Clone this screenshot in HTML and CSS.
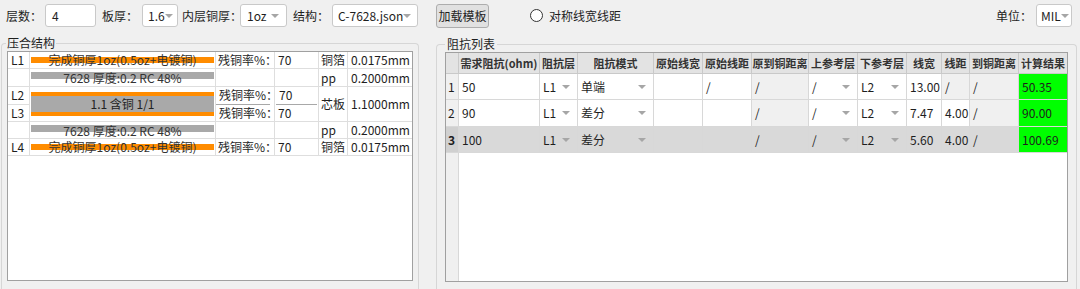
FILE: index.html
```html
<!DOCTYPE html>
<html lang="zh-CN">
    <head>
        <meta charset="UTF-8">
        <title>阻抗计算</title>
        <link rel="stylesheet" href="styles.css">
    </head>
    <body>

        <div class="toolbar">
            <span class="lbl lbl-layers">层数：</span>
            <div class="edit edit-layers">4</div>
            <span class="lbl lbl-thick">板厚：</span>
            <div class="combo combo-thick">1.6<span class="arrow"></span></div>
            <span class="lbl lbl-inner">内层铜厚：</span>
            <div class="combo combo-inner">1oz<span class="arrow"></span></div>
            <span class="lbl lbl-struct">结构：</span>
            <div class="combo combo-struct">C-7628.json<span class="arrow"></span></div>
            <button class="btn-load">加载模板</button>
            <span class="radio"></span>
            <span class="lbl">对称线宽线距</span>
            <span class="lbl lbl-unit">单位：</span>
            <div class="combo combo-unit">MIL<span class="arrow"></span></div>
        </div>

        <div class="panels">
            <fieldset class="group group-stack">
                <legend>压合结构</legend>
                <div class="stack">
                    <div class="srow h17">
                        <div class="sc c-layer">L1</div>
                        <div class="sc c-bar"><div class="bar bar-cu">完成铜厚1oz(0.5oz+电镀铜)</div></div>
                        <div class="sc c-rate">残铜率%：</div>
                        <div class="sc c-val">70</div>
                        <div class="sc c-type">铜箔</div>
                        <div class="sc c-th">0.0175mm</div>
                    </div>
                    <div class="srow h18">
                        <div class="sc c-layer"></div>
                        <div class="sc c-bar"><div class="bar bar-pp">7628 厚度:0.2 RC 48%</div></div>
                        <div class="sc c-rate"></div>
                        <div class="sc c-val"></div>
                        <div class="sc c-type">pp</div>
                        <div class="sc c-th">0.2000mm</div>
                    </div>
                    <div class="srow h35">
                        <div class="sc c-layer split">
                            <div class="half half-line">L2</div>
                            <div class="half">L3</div>
                        </div>
                        <div class="sc c-bar"><div class="core">1.1 含铜 1/1</div></div>
                        <div class="sc c-rate split">
                            <div class="half half-dark">残铜率%：</div>
                            <div class="half">残铜率%：</div>
                        </div>
                        <div class="sc c-val split">
                            <div class="half half-dark val-in">70</div>
                            <div class="half val-in">70</div>
                        </div>
                        <div class="sc c-type">芯板</div>
                        <div class="sc c-th">1.1000mm</div>
                    </div>
                    <div class="srow h17">
                        <div class="sc c-layer"></div>
                        <div class="sc c-bar"><div class="bar bar-pp">7628 厚度:0.2 RC 48%</div></div>
                        <div class="sc c-rate"></div>
                        <div class="sc c-val"></div>
                        <div class="sc c-type">pp</div>
                        <div class="sc c-th">0.2000mm</div>
                    </div>
                    <div class="srow h17">
                        <div class="sc c-layer">L4</div>
                        <div class="sc c-bar"><div class="bar bar-cu">完成铜厚1oz(0.5oz+电镀铜)</div></div>
                        <div class="sc c-rate">残铜率%：</div>
                        <div class="sc c-val">70</div>
                        <div class="sc c-type">铜箔</div>
                        <div class="sc c-th">0.0175mm</div>
                    </div>
                </div>
            </fieldset>

            <fieldset class="group group-imp">
                <legend>阻抗列表</legend>
                <div class="grid">
                    <div class="grow ghead">
                        <div class="gc k0"></div>
                        <div class="gc k1">需求阻抗(ohm)</div>
                        <div class="gc k2">阻抗层</div>
                        <div class="gc k3">阻抗模式</div>
                        <div class="gc k4">原始线宽</div>
                        <div class="gc k5">原始线距</div>
                        <div class="gc k6">原到铜距离</div>
                        <div class="gc k7">上参考层</div>
                        <div class="gc k8">下参考层</div>
                        <div class="gc k9">线宽</div>
                        <div class="gc k10">线距</div>
                        <div class="gc k11">到铜距离</div>
                        <div class="gc k12">计算结果</div>
                    </div>
                    <div class="grow r26">
                        <div class="gc k0 rh">1</div>
                        <div class="gc k1">50</div>
                        <div class="gc k2 drop">L1<span class="arrow"></span></div>
                        <div class="gc k3 drop">单端<span class="arrow"></span></div>
                        <div class="gc k4"></div>
                        <div class="gc k5">/</div>
                        <div class="gc k6 off">/</div>
                        <div class="gc k7 drop">/<span class="arrow"></span></div>
                        <div class="gc k8 drop">L2<span class="arrow"></span></div>
                        <div class="gc k9">13.00</div>
                        <div class="gc k10 off">/</div>
                        <div class="gc k11 off">/</div>
                        <div class="gc k12 ok">50.35</div>
                    </div>
                    <div class="grow r27">
                        <div class="gc k0 rh">2</div>
                        <div class="gc k1">90</div>
                        <div class="gc k2 drop">L1<span class="arrow"></span></div>
                        <div class="gc k3 drop">差分<span class="arrow"></span></div>
                        <div class="gc k4"></div>
                        <div class="gc k5"></div>
                        <div class="gc k6 off">/</div>
                        <div class="gc k7 drop">/<span class="arrow"></span></div>
                        <div class="gc k8 drop">L2<span class="arrow"></span></div>
                        <div class="gc k9">7.47</div>
                        <div class="gc k10">4.00</div>
                        <div class="gc k11 off">/</div>
                        <div class="gc k12 ok">90.00</div>
                    </div>
                    <div class="grow r26 sel">
                        <div class="gc k0 rh">3</div>
                        <div class="gc k1">100</div>
                        <div class="gc k2 drop">L1<span class="arrow"></span></div>
                        <div class="gc k3 drop">差分<span class="arrow"></span></div>
                        <div class="gc k4"></div>
                        <div class="gc k5"></div>
                        <div class="gc k6">/</div>
                        <div class="gc k7 drop">/<span class="arrow"></span></div>
                        <div class="gc k8 drop">L2<span class="arrow"></span></div>
                        <div class="gc k9">5.60</div>
                        <div class="gc k10">4.00</div>
                        <div class="gc k11">/</div>
                        <div class="gc k12 ok">100.69</div>
                    </div>
                </div>
            </fieldset>
        </div>

    </body>
</html>
```

FILE: styles.css
```css
* {
    box-sizing: border-box;
}
html,
body {
    height: 289px;
    overflow: hidden;
}
body {
    margin: 0;
    background: #f0f0f0;
    font-family: "Noto Sans CJK SC", "Noto Sans", sans-serif;
    font-size: 12px;
    line-height: 14px;
    color: #1e1e1e;
}

/* top bar */
.toolbar {
    display: flex;
    align-items: center;
    height: 36px;
    padding: 4px 8px 9px 6px;
}
.lbl {
    white-space: nowrap;
}
.lbl-layers { width: 39px; }
.lbl-thick { width: 40px; margin-left: 6px; }
.lbl-inner { width: 58px; margin-left: 4px; }
.lbl-struct { width: 39px; margin-left: 6px; }
.lbl-unit { margin-left: auto; width: 40px; }

.edit,
.combo {
    height: 23px;
    background: #fff;
    border: 1px solid #c9c9c9;
    border-radius: 3px;
    display: flex;
    align-items: center;
    padding: 0 7px 0 6px;
    white-space: nowrap;
}
.combo {
    justify-content: space-between;
}
.edit-layers { width: 51px; }
.combo-thick { width: 36px; padding-left: 5px; }
.combo-inner { width: 47px; }
.combo-struct { width: 86px; padding-left: 5px; }
.combo-unit { width: 36px; padding-left: 4px; padding-right: 5px; }

.arrow {
    width: 0;
    height: 0;
    border-left: 4px solid transparent;
    border-right: 4px solid transparent;
    border-top: 4px solid #a6a6a6;
}

.btn-load {
    margin-left: 18px;
    width: 53px;
    height: 24px;
    padding: 0;
    font: inherit;
    color: #1e1e1e;
    background: #e1e1e1;
    border: 1px solid #adadad;
    border-radius: 3px;
}
.radio {
    width: 13px;
    height: 13px;
    margin-left: 41px;
    margin-right: 6px;
    border: 1px solid #333;
    border-radius: 50%;
    background: #fff;
}

/* group boxes */
.panels {
    display: flex;
    padding-left: 1px;
}
.group {
    margin: 0;
    min-width: 0;
    height: 253px;
    border: 1px solid #d6d6d6;
    border-bottom: none;
    border-radius: 4px 4px 0 0;
}
.group legend {
    padding: 0 1px;
    margin-left: -1px;
    line-height: 14px;
}
.group-stack {
    width: 418px;
    padding: 1px 5px 0;
}
.group-imp {
    width: 641px;
    height: 252px;
    margin-left: 17px;
    margin-top: 1px;
    padding: 1px 8px 0;
}
.group-imp legend {
    padding: 0 2px;
    margin-left: 0;
}

/* stack-up table */
.stack {
    height: 230px;
    background: #fff;
    border: 1px solid #a0a0a0;
}
.srow {
    display: flex;
    border-bottom: 1px solid #dedede;
}
.h17 { height: 17px; }
.h18 { height: 18px; }
.h35 { height: 35px; }
.sc {
    display: flex;
    align-items: center;
    border-right: 1px solid #dedede;
    padding-left: 3px;
    white-space: nowrap;
}
.c-layer { width: 22px; }
.c-bar { width: 186px; padding: 0 1px 0 1px; }
.c-rate { width: 59px; padding-left: 2px; }
.c-val { width: 44px; }
.c-type { width: 29px; padding-left: 2px; }
.c-th { width: 60px; border-right: none; }

.split {
    flex-direction: column;
    align-items: stretch;
    padding: 0;
}
.half {
    flex: 1;
    display: flex;
    align-items: center;
    padding-left: 3px;
}
.half-line {
    border-bottom: 1px solid #dedede;
}
.c-rate .half-dark {
    border-bottom: 1px solid #a8a8a8;
    margin-right: 4px;
}
.c-val .half-dark {
    border-bottom: 1px solid #a8a8a8;
    margin: 0 1px 0 1px;
}
.val-in {
    padding-left: 3px;
}

.bar {
    width: 184px;
    height: 100%;
    display: flex;
    align-items: center;
    justify-content: center;
    color: #333;
}
.bar-cu {
    background: linear-gradient(#ff8c00, #ff8c00) center / 100% 6px no-repeat;
}
.bar-pp {
    background: linear-gradient(#a9a9a9, #a9a9a9) center 3px / 100% 7px no-repeat;
    padding-top: 1px;
}
.core {
    width: 184px;
    height: 24px;
    background: #a9a9a9;
    border-top: 4px solid #ff8c00;
    border-bottom: 4px solid #ff8c00;
    display: flex;
    align-items: center;
    justify-content: center;
    color: #222;
}

/* impedance table */
.grid {
    height: 230px;
    border: 1px solid #a0a0a0;
    background: linear-gradient(to right, #f0f0f0 12px, #d8d8d8 12px, #d8d8d8 13px, #fff 13px);
}
.grow {
    display: flex;
    border-bottom: 1px solid #d8d8d8;
}
.ghead {
    height: 21px;
    background: #e3e3e3;
    border-bottom-color: #c9c9c9;
}
.r26 { height: 26px; }
.r27 { height: 27px; }
.gc {
    display: flex;
    align-items: center;
    padding-left: 3px;
    border-right: 1px solid #d8d8d8;
    background: #fff;
    white-space: nowrap;
}
.ghead .gc {
    justify-content: center;
    padding: 0;
    font-size: 11px;
    font-weight: bold;
    color: #333;
    background: #e3e3e3;
    border-right-color: #c9c9c9;
    overflow: hidden;
}
.k0 { width: 13px; }
.k1 { width: 81px; }
.k2 { width: 38px; }
.k3 { width: 76px; }
.k4 { width: 49px; }
.k5 { width: 49px; }
.k6 { width: 57px; }
.k7 { width: 49px; }
.k8 { width: 49px; }
.k9 { width: 35px; }
.k10 { width: 28px; }
.k11 { width: 49px; }
.k12 { width: 48px; border-right: none; }

.gc.rh {
    padding-left: 2px;
    background: #f0f0f0;
}
.drop {
    justify-content: space-between;
    padding-right: 7px;
}
.gc.off {
    background: #f0f0f0;
}
.gc.ok {
    background: #00ff00;
}
.sel .gc {
    background: #d9d9d9;
}
.sel .gc.rh {
    background: #d0d0d0;
    font-weight: bold;
}
.sel .gc.ok {
    background: #00ff00;
}
```
